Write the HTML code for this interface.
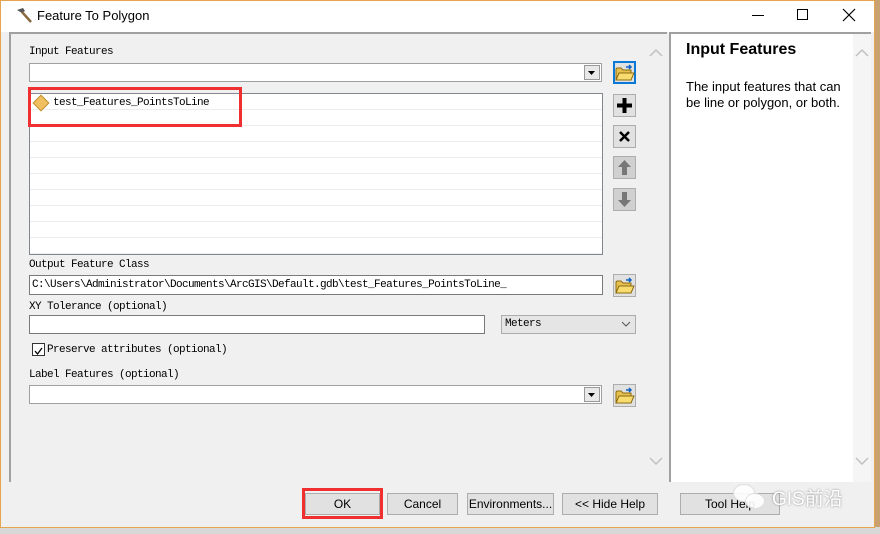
<!DOCTYPE html>
<html><head><meta charset="utf-8"><style>
*{margin:0;padding:0;box-sizing:border-box}
body{width:880px;height:534px;overflow:hidden;background:#6d6d6d;position:relative;font-family:"Liberation Sans",sans-serif}
.a{position:absolute}
.mono{font-family:"Liberation Mono",monospace;font-size:11px;color:#000;letter-spacing:-0.6px}
.btn{position:absolute;background:#e1e1e1;border:1px solid #adadad;font-size:12px;text-align:center;line-height:20px;color:#000}
.ib{position:absolute;width:23px;height:23px;background:#e1e1e1;border:1px solid #adadad;text-align:center}
.folder{position:absolute;width:23px;height:23px;background:#e1e1e1;border:1px solid #adadad}
</style></head><body>
<svg width="0" height="0" style="position:absolute"><defs><g id="fd"><path d="M2 7 L2 18 L17 18 L17 8 L9 8 L7 6 L3 6 Z" fill="#e8c050" stroke="#8a6a10"/><path d="M2 18 L5 11 L20 11 L17 18 Z" fill="#f8dc70" stroke="#8a6a10"/><path d="M12 5 L17 5 M15 3 L17 5 L15 7" stroke="#1060c0" stroke-width="1.5" fill="none"/></g></defs></svg>
<div class="a" style="left:875px;top:0;width:5px;height:534px;background:#c9a070"></div>
<div class="a" style="left:0;top:527px;width:880px;height:7px;background:#d8d8d8"></div>
<div class="a" style="left:0;top:0;width:875px;height:528px;background:#f0f0f0;border:1px solid #e5a550"></div>
<div class="a" style="left:1px;top:1px;width:873px;height:31px;background:#fff"></div>
<svg class="a" style="left:14px;top:7px" width="20" height="18"><path d="M3 3 L9 1 L11 4 L8 6 Z" fill="#555"/><path d="M8 5 L17 15" stroke="#8a6a40" stroke-width="2.5"/></svg>
<div class="a" style="left:37px;top:8px;font-size:13px;color:#000">Feature To Polygon</div>
<div class="a" style="left:752px;top:15px;width:12px;height:1px;background:#000"></div>
<div class="a" style="left:797px;top:9px;width:11px;height:11px;border:1px solid #000"></div>
<svg class="a" style="left:842px;top:8px" width="14" height="14"><path d="M1 1L13 13M13 1L1 13" stroke="#000" stroke-width="1.2"/></svg>
<div class="a" style="left:9px;top:32px;width:658px;height:450px;border-top:2px solid #a0a0a0;border-left:2px solid #a0a0a0;background:#f0f0f0"></div>
<svg class="a" style="left:649px;top:48px" width="14" height="10"><path d="M1 8L7 2L13 8" stroke="#c0c0c0" fill="none" stroke-width="1.5"/></svg>
<svg class="a" style="left:649px;top:456px" width="14" height="10"><path d="M1 2L7 8L13 2" stroke="#c0c0c0" fill="none" stroke-width="1.5"/></svg>
<div class="a mono" style="left:29px;top:46px">Input Features</div>
<div class="a" style="left:29px;top:63px;width:573px;height:19px;background:#fff;border:1px solid #a0a0a0"></div>
<div class="a" style="left:584px;top:65px;width:16px;height:15px;background:#e8e8e8;border:1px solid #999"><svg width="14" height="13"><path d="M3 5L10 5L6.5 9Z" fill="#000"/></svg></div>
<div class="folder" style="left:613px;top:61px;border:2px solid #0a78d7"><svg width="21" height="21" style="margin:-1px"><use href="#fd"/></svg></div>
<div class="a" style="left:29px;top:93px;width:574px;height:162px;background:#fff;border:1px solid #828790;background-image:repeating-linear-gradient(#fff 0 15px,#ececec 15px 16px)"></div>
<div class="a" style="left:35px;top:97px;width:12px;height:12px;background:#f0c060;border:1px solid #c09030;transform:rotate(45deg)"></div>
<div class="a mono" style="left:53px;top:97px">test_Features_PointsToLine</div>
<div class="a" style="left:28px;top:87px;width:214px;height:40px;border:3px solid #f03030"></div>
<div class="ib" style="left:613px;top:94px"><svg width="21" height="21"><path d="M10.5 3V18M3 10.5H18" stroke="#000" stroke-width="4"/></svg></div>
<div class="ib" style="left:613px;top:125px"><svg width="21" height="21"><path d="M6 6L15 15M15 6L6 15" stroke="#000" stroke-width="2.5"/></svg></div>
<div class="ib" style="left:613px;top:156px;background:#d0d0d0"><svg width="21" height="21"><path d="M10.5 3L17 10H13V18H8V10H4Z" fill="#777"/></svg></div>
<div class="ib" style="left:613px;top:188px;background:#d0d0d0"><svg width="21" height="21"><path d="M10.5 18L17 11H13V3H8V11H4Z" fill="#777"/></svg></div>
<div class="a mono" style="left:29px;top:259px">Output Feature Class</div>
<div class="a" style="left:29px;top:275px;width:574px;height:20px;background:#fff;border:1px solid #7a7a7a"></div>
<div class="a mono" style="left:32px;top:279px">C:\Users\Administrator\Documents\ArcGIS\Default.gdb\test_Features_PointsToLine_</div>
<div class="folder" style="left:613px;top:274px"><svg width="21" height="21"><use href="#fd"/></svg></div>
<div class="a mono" style="left:29px;top:301px">XY Tolerance (optional)</div>
<div class="a" style="left:29px;top:315px;width:456px;height:19px;background:#fff;border:1px solid #7a7a7a"></div>
<div class="a" style="left:501px;top:315px;width:135px;height:19px;background:#e5e5e5;border:1px solid #adadad"></div>
<div class="a mono" style="left:505px;top:318px">Meters</div>
<svg class="a" style="left:621px;top:321px" width="10" height="7"><path d="M1 1L5 5L9 1" stroke="#555" fill="none"/></svg>
<div class="a" style="left:32px;top:343px;width:13px;height:13px;background:#fff;border:1px solid #333"><svg width="11" height="11"><path d="M2 5L4.5 8L9 2" stroke="#000" fill="none" stroke-width="1.3"/></svg></div>
<div class="a mono" style="left:47px;top:344px">Preserve attributes (optional)</div>
<div class="a mono" style="left:29px;top:369px">Label Features (optional)</div>
<div class="a" style="left:29px;top:385px;width:573px;height:19px;background:#fff;border:1px solid #a0a0a0"></div>
<div class="a" style="left:584px;top:387px;width:16px;height:15px;background:#e8e8e8;border:1px solid #999"><svg width="14" height="13"><path d="M3 5L10 5L6.5 9Z" fill="#000"/></svg></div>
<div class="folder" style="left:613px;top:384px"><svg width="21" height="21"><use href="#fd"/></svg></div>
<div class="a" style="left:669px;top:32px;width:202px;height:450px;background:#fff;border-top:2px solid #a0a0a0;border-left:2px solid #a0a0a0"></div>
<div class="a" style="left:853px;top:34px;width:18px;height:448px;background:#f5f5f5"></div>
<svg class="a" style="left:855px;top:48px" width="14" height="10"><path d="M1 8L7 2L13 8" stroke="#c0c0c0" fill="none" stroke-width="1.5"/></svg>
<svg class="a" style="left:855px;top:456px" width="14" height="10"><path d="M1 2L7 8L13 2" stroke="#c0c0c0" fill="none" stroke-width="1.5"/></svg>
<div class="a" style="left:686px;top:41px;font-size:16px;font-weight:bold;color:#000">Input Features</div>
<div class="a" style="left:686px;top:79px;font-size:13px;line-height:16px;color:#000;width:160px">The input features that can be line or polygon, or both.</div>
<div class="btn" style="left:305px;top:493px;width:75px;height:22px">OK</div>
<div class="a" style="left:302px;top:488px;width:81px;height:31px;border:3px solid #f03030"></div>
<div class="btn" style="left:387px;top:493px;width:71px;height:22px">Cancel</div>
<div class="btn" style="left:467px;top:493px;width:87px;height:22px">Environments...</div>
<div class="btn" style="left:562px;top:493px;width:96px;height:22px">&lt;&lt; Hide Help</div>
<div class="btn" style="left:680px;top:493px;width:100px;height:22px">Tool Help</div>
<div class="a" style="left:733px;top:484px;width:22px;height:18px;border-radius:50%;background:#fff;border:1px solid #ddd;opacity:.9"></div>
<div class="a" style="left:745px;top:493px;width:20px;height:16px;border-radius:50%;background:#fff;border:1px solid #ddd;opacity:.9"></div>
<div class="a" style="left:772px;top:484px;font-size:19px;color:#fff;text-shadow:0 0 2px #888;font-family:'Liberation Sans','Noto Sans CJK SC',sans-serif">GIS前沿</div>
</body></html>
